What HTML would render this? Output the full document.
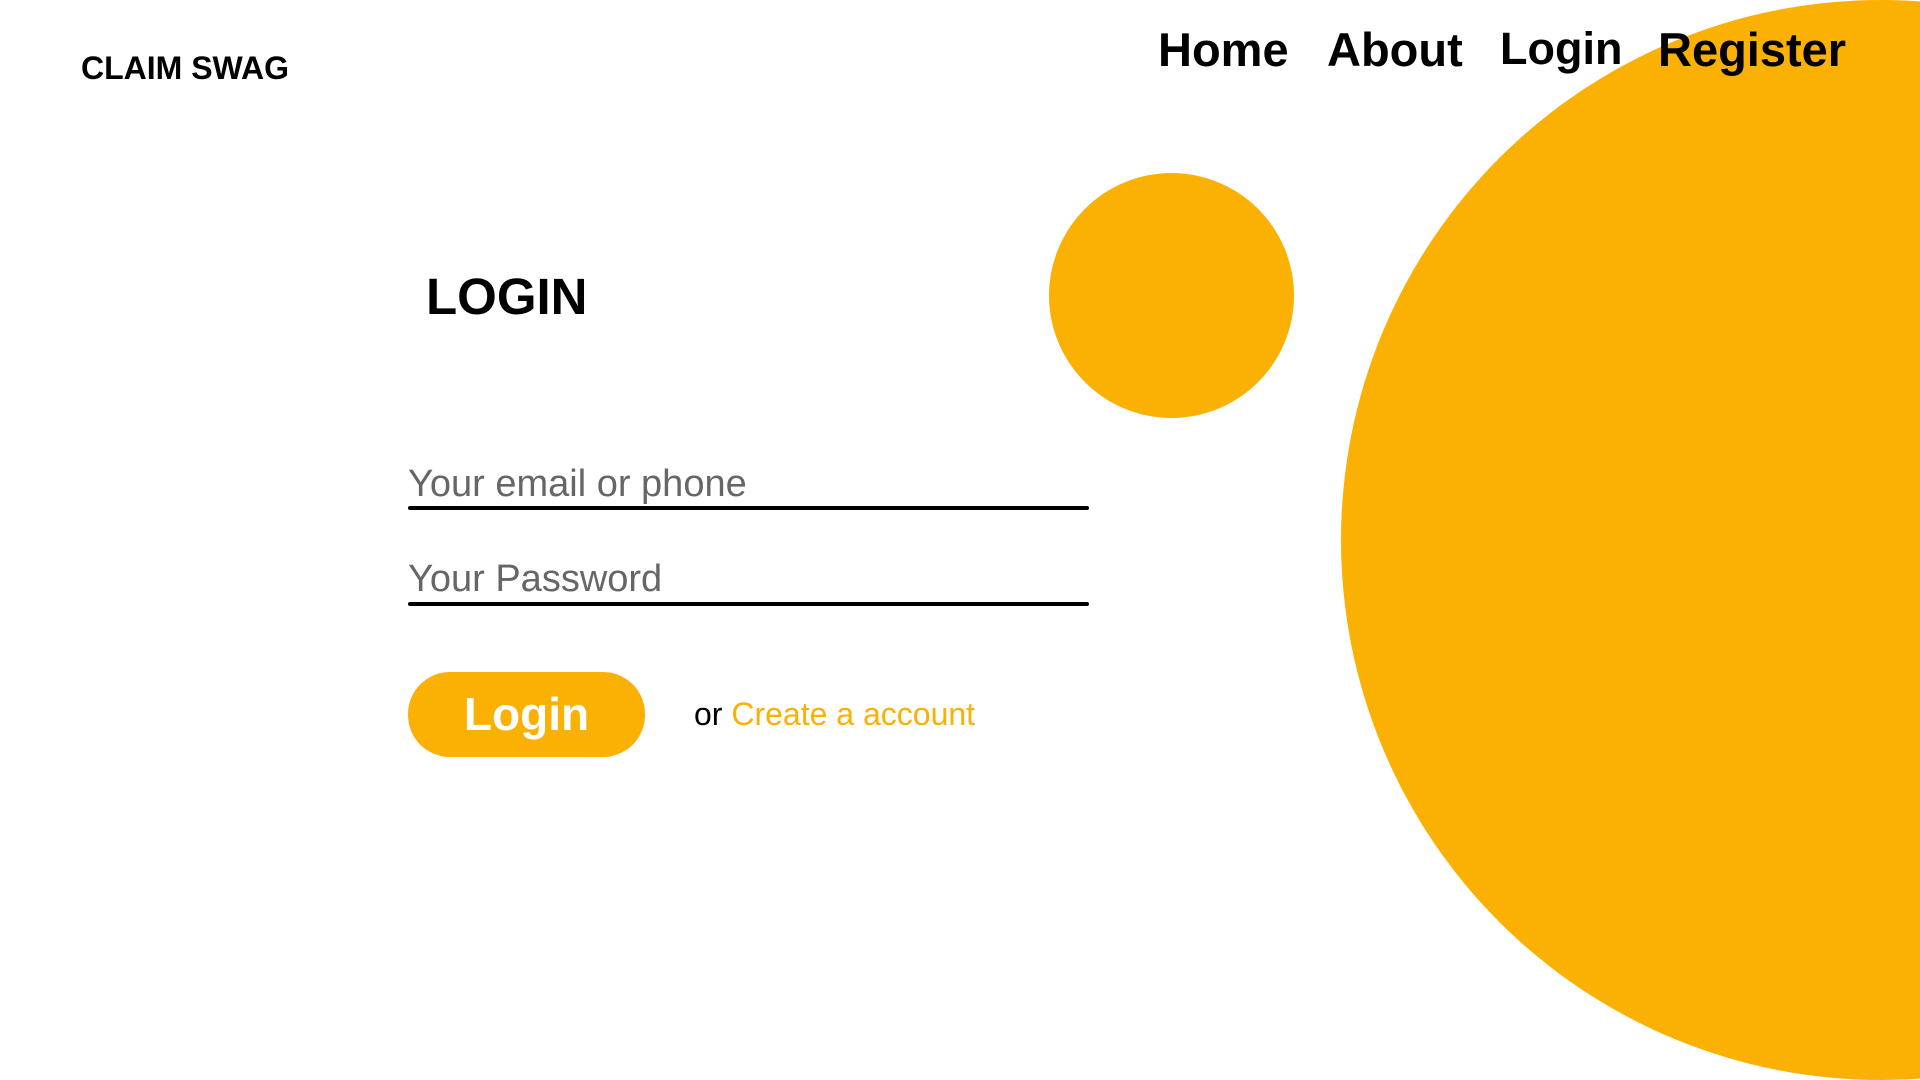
<!DOCTYPE html>
<html><head><meta charset="utf-8"><style>
html,body{margin:0;padding:0;}
body{width:1920px;height:1080px;position:relative;overflow:hidden;background:#fff;font-family:"Liberation Sans",sans-serif;}
.a{position:absolute;white-space:nowrap;}
.big{position:absolute;left:1341px;top:0;width:1080px;height:1080px;border-radius:50%;background:#FBB004;}
.small{position:absolute;left:1049px;top:173px;width:245px;height:245px;border-radius:50%;background:#FBB004;}
.nav{font-weight:bold;font-size:47px;color:#000;top:22px;}
.line{position:absolute;left:408px;width:681px;height:4px;background:#000;border-radius:2px;}
.ph{font-size:38px;color:#666;left:408px;font-weight:300;}
.btn{position:absolute;left:408px;top:672px;width:237px;height:85px;border-radius:42px;background:#FBB004;color:#fff;font-weight:bold;font-size:46px;text-align:center;line-height:85px;}
</style></head><body>
<div class="big"></div>
<div class="small"></div>
<div class="a" style="left:81px;top:50px;font-weight:bold;font-size:32px;">CLAIM SWAG</div>
<div class="a nav" style="left:1158px;">Home</div>
<div class="a nav" style="left:1327px;">About</div>
<div class="a nav" style="left:1500px;font-size:45px;top:23px;">Login</div>
<div class="a nav" style="left:1658px;">Register</div>
<div class="a" style="left:426px;top:267px;font-weight:bold;font-size:51px;">LOGIN</div>
<div class="a ph" style="top:463px;">Your email or phone</div>
<div class="line" style="top:506px;"></div>
<div class="a ph" style="top:558px;">Your Password</div>
<div class="line" style="top:602px;"></div>
<div class="btn">Login</div>
<div class="a" style="left:694px;top:696px;font-size:32px;color:#000;">or <span style="color:#FBB004">Create a account</span></div>
</body></html>
